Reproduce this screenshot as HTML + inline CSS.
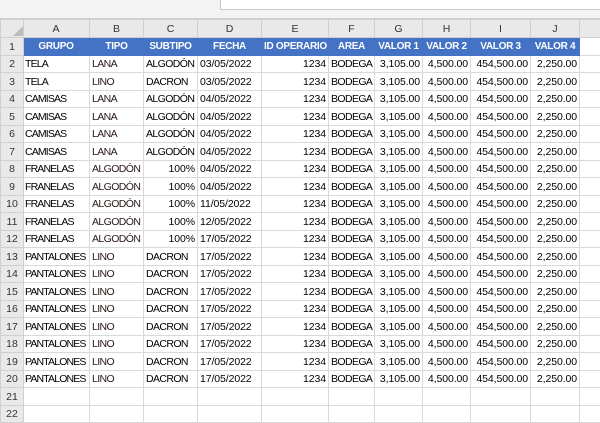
<!DOCTYPE html>
<html><head><meta charset="utf-8"><style>
*{margin:0;padding:0;box-sizing:border-box}
body{width:600px;height:420px;overflow:hidden;background:#fff;font-family:"Liberation Sans",Arial,sans-serif;font-size:10.5px;letter-spacing:-0.6px;color:#000;position:relative}
.top{position:absolute;left:0;top:0;width:600px;height:19px;background:#f3f3f3;border-bottom:1px solid #d0d0d0}
.box{position:absolute;left:220px;top:-1px;width:381px;height:11px;background:#fff;border:1px solid #c8c8c8}
table{position:absolute;left:0;top:19px;width:600px;border-collapse:collapse;table-layout:fixed}
td{height:17.5px;border:1px solid #d9d9d9;white-space:nowrap;overflow:hidden;padding:1px 2px 0;line-height:14px;vertical-align:middle}
tr.ch td{height:18px;background:#e9e9e9;color:#333;text-align:center;letter-spacing:0;border-color:#cfcfcf}
td.rh{background:#e9e9e9;color:#333;text-align:center;letter-spacing:0;border-color:#cfcfcf;padding:1px 0 0}
tr.h td.d{background:#4472c4;color:#fff;font-weight:bold;font-size:10px;text-align:center;border-color:#4472c4;letter-spacing:-0.3px}
.r{text-align:right}
tr td:nth-child(5),tr td.r{letter-spacing:-0.1px}
tr td:nth-child(2){letter-spacing:-0.85px;padding-left:1px}
.b{color:#2a1818}
</style></head><body>
<div class="top"></div><div class="box"></div>
<table>
<colgroup><col style="width:23px"><col style="width:66px"><col style="width:54px"><col style="width:54px"><col style="width:64px"><col style="width:67px"><col style="width:46px"><col style="width:48px"><col style="width:48px"><col style="width:60px"><col style="width:49px"><col style="width:21px"></colgroup>
<tr class="ch"><td style="background:#e9e9e9"><svg width="12" height="12" style="display:block;margin:3px 0 0 9px"><polygon points="11,1 11,11 1,11" fill="#bdbdbd"/></svg></td><td style="letter-spacing:0">A</td><td>B</td><td>C</td><td>D</td><td>E</td><td>F</td><td>G</td><td>H</td><td>I</td><td>J</td><td></td></tr>
<tr class="h"><td class="rh">1</td><td class="d">GRUPO</td><td class="d">TIPO</td><td class="d">SUBTIPO</td><td class="d">FECHA</td><td class="d">ID OPERARIO</td><td class="d">AREA</td><td class="d">VALOR 1</td><td class="d">VALOR 2</td><td class="d">VALOR 3</td><td class="d">VALOR 4</td><td></td></tr>
<tr><td class="rh">2</td><td>TELA</td><td class="b">LANA</td><td>ALGODÓN</td><td>03/05/2022</td><td class="r">1234</td><td>BODEGA</td><td class="r">3,105.00</td><td class="r">4,500.00</td><td class="r">454,500.00</td><td class="r">2,250.00</td><td></td></tr>
<tr><td class="rh">3</td><td>TELA</td><td class="b">LINO</td><td>DACRON</td><td>03/05/2022</td><td class="r">1234</td><td>BODEGA</td><td class="r">3,105.00</td><td class="r">4,500.00</td><td class="r">454,500.00</td><td class="r">2,250.00</td><td></td></tr>
<tr><td class="rh">4</td><td>CAMISAS</td><td class="b">LANA</td><td>ALGODÓN</td><td>04/05/2022</td><td class="r">1234</td><td>BODEGA</td><td class="r">3,105.00</td><td class="r">4,500.00</td><td class="r">454,500.00</td><td class="r">2,250.00</td><td></td></tr>
<tr><td class="rh">5</td><td>CAMISAS</td><td class="b">LANA</td><td>ALGODÓN</td><td>04/05/2022</td><td class="r">1234</td><td>BODEGA</td><td class="r">3,105.00</td><td class="r">4,500.00</td><td class="r">454,500.00</td><td class="r">2,250.00</td><td></td></tr>
<tr><td class="rh">6</td><td>CAMISAS</td><td class="b">LANA</td><td>ALGODÓN</td><td>04/05/2022</td><td class="r">1234</td><td>BODEGA</td><td class="r">3,105.00</td><td class="r">4,500.00</td><td class="r">454,500.00</td><td class="r">2,250.00</td><td></td></tr>
<tr><td class="rh">7</td><td>CAMISAS</td><td class="b">LANA</td><td>ALGODÓN</td><td>04/05/2022</td><td class="r">1234</td><td>BODEGA</td><td class="r">3,105.00</td><td class="r">4,500.00</td><td class="r">454,500.00</td><td class="r">2,250.00</td><td></td></tr>
<tr><td class="rh">8</td><td>FRANELAS</td><td class="b">ALGODÓN</td><td class="r">100%</td><td>04/05/2022</td><td class="r">1234</td><td>BODEGA</td><td class="r">3,105.00</td><td class="r">4,500.00</td><td class="r">454,500.00</td><td class="r">2,250.00</td><td></td></tr>
<tr><td class="rh">9</td><td>FRANELAS</td><td class="b">ALGODÓN</td><td class="r">100%</td><td>04/05/2022</td><td class="r">1234</td><td>BODEGA</td><td class="r">3,105.00</td><td class="r">4,500.00</td><td class="r">454,500.00</td><td class="r">2,250.00</td><td></td></tr>
<tr><td class="rh">10</td><td>FRANELAS</td><td class="b">ALGODÓN</td><td class="r">100%</td><td>11/05/2022</td><td class="r">1234</td><td>BODEGA</td><td class="r">3,105.00</td><td class="r">4,500.00</td><td class="r">454,500.00</td><td class="r">2,250.00</td><td></td></tr>
<tr><td class="rh">11</td><td>FRANELAS</td><td class="b">ALGODÓN</td><td class="r">100%</td><td>12/05/2022</td><td class="r">1234</td><td>BODEGA</td><td class="r">3,105.00</td><td class="r">4,500.00</td><td class="r">454,500.00</td><td class="r">2,250.00</td><td></td></tr>
<tr><td class="rh">12</td><td>FRANELAS</td><td class="b">ALGODÓN</td><td class="r">100%</td><td>17/05/2022</td><td class="r">1234</td><td>BODEGA</td><td class="r">3,105.00</td><td class="r">4,500.00</td><td class="r">454,500.00</td><td class="r">2,250.00</td><td></td></tr>
<tr><td class="rh">13</td><td>PANTALONES</td><td class="b">LINO</td><td>DACRON</td><td>17/05/2022</td><td class="r">1234</td><td>BODEGA</td><td class="r">3,105.00</td><td class="r">4,500.00</td><td class="r">454,500.00</td><td class="r">2,250.00</td><td></td></tr>
<tr><td class="rh">14</td><td>PANTALONES</td><td class="b">LINO</td><td>DACRON</td><td>17/05/2022</td><td class="r">1234</td><td>BODEGA</td><td class="r">3,105.00</td><td class="r">4,500.00</td><td class="r">454,500.00</td><td class="r">2,250.00</td><td></td></tr>
<tr><td class="rh">15</td><td>PANTALONES</td><td class="b">LINO</td><td>DACRON</td><td>17/05/2022</td><td class="r">1234</td><td>BODEGA</td><td class="r">3,105.00</td><td class="r">4,500.00</td><td class="r">454,500.00</td><td class="r">2,250.00</td><td></td></tr>
<tr><td class="rh">16</td><td>PANTALONES</td><td class="b">LINO</td><td>DACRON</td><td>17/05/2022</td><td class="r">1234</td><td>BODEGA</td><td class="r">3,105.00</td><td class="r">4,500.00</td><td class="r">454,500.00</td><td class="r">2,250.00</td><td></td></tr>
<tr><td class="rh">17</td><td>PANTALONES</td><td class="b">LINO</td><td>DACRON</td><td>17/05/2022</td><td class="r">1234</td><td>BODEGA</td><td class="r">3,105.00</td><td class="r">4,500.00</td><td class="r">454,500.00</td><td class="r">2,250.00</td><td></td></tr>
<tr><td class="rh">18</td><td>PANTALONES</td><td class="b">LINO</td><td>DACRON</td><td>17/05/2022</td><td class="r">1234</td><td>BODEGA</td><td class="r">3,105.00</td><td class="r">4,500.00</td><td class="r">454,500.00</td><td class="r">2,250.00</td><td></td></tr>
<tr><td class="rh">19</td><td>PANTALONES</td><td class="b">LINO</td><td>DACRON</td><td>17/05/2022</td><td class="r">1234</td><td>BODEGA</td><td class="r">3,105.00</td><td class="r">4,500.00</td><td class="r">454,500.00</td><td class="r">2,250.00</td><td></td></tr>
<tr><td class="rh">20</td><td>PANTALONES</td><td class="b">LINO</td><td>DACRON</td><td>17/05/2022</td><td class="r">1234</td><td>BODEGA</td><td class="r">3,105.00</td><td class="r">4,500.00</td><td class="r">454,500.00</td><td class="r">2,250.00</td><td></td></tr>
<tr><td class="rh">21</td><td></td><td></td><td></td><td></td><td></td><td></td><td></td><td></td><td></td><td></td><td></td></tr>
<tr><td class="rh">22</td><td></td><td></td><td></td><td></td><td></td><td></td><td></td><td></td><td></td><td></td><td></td></tr>
</table>
</body></html>
